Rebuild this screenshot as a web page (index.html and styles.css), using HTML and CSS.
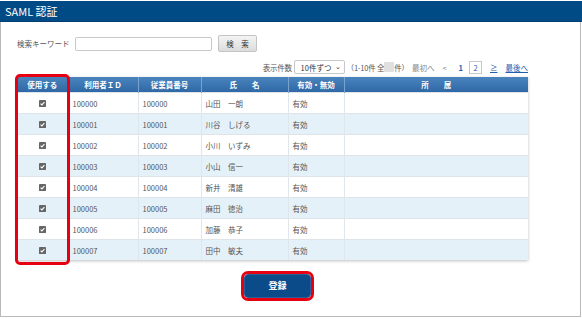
FILE: index.html
```html
<!DOCTYPE html>
<html lang="ja">
<head>
    <meta charset="UTF-8">
    <meta name="viewport" content="width=device-width, initial-scale=1.0">
    <title>SAML 認証</title>
    <link rel="stylesheet" href="styles.css">
</head>
<body>
    <div class="window">
        <header class="titlebar">SAML 認証</header>

        <div class="panel">
            <!-- 検索 -->
            <div class="search-row">
                <label for="keyword">検索キーワード</label>
                <input type="text" id="keyword">
                <button class="btn-search">検　索</button>
            </div>

            <!-- ページ送り -->
            <div class="pager">
                <span class="pager-label">表示件数</span>
                <span class="select">10件ずつ <span class="caret">&#8964;</span></span>
                <span class="count">（1-10件 全<span class="mask"></span>件）</span>
                <span class="muted">最初へ</span>
                <span class="muted lt">&lt;</span>
                <span class="page current">1</span>
                <span class="page boxed">2</span>
                <a class="link">&ge;</a>
                <a class="link">最後へ</a>
            </div>

            <!-- 一覧 -->
            <div class="table-wrap">
                <table class="users">
                    <colgroup>
                        <col style="width: 51px">
                        <col style="width: 70px">
                        <col style="width: 63px">
                        <col style="width: 87px">
                        <col style="width: 56px">
                        <col>
                    </colgroup>
                    <thead>
                        <tr>
                            <th>使用する</th>
                            <th>利用者ＩＤ</th>
                            <th>従業員番号</th>
                            <th>氏　　名</th>
                            <th>有効・無効</th>
                            <th>所　　属</th>
                        </tr>
                    </thead>
                    <tbody id="rows"></tbody>
                </table>
                <div class="mark-column"></div>
            </div>

            <div class="actions">
                <button class="btn-save">登録</button>
            </div>
        </div>
    </div>

    <script>
        const users = [
            ["100000", "山田　一朗"],
            ["100001", "川谷　しげる"],
            ["100002", "小川　いずみ"],
            ["100003", "小山　信一"],
            ["100004", "新井　清雄"],
            ["100005", "麻田　徳治"],
            ["100006", "加藤　恭子"],
            ["100007", "田中　敏夫"]
        ];

        const check = '<svg class="chk" width="7" height="7" viewBox="0 0 8 8"><rect width="8" height="8" rx="1" fill="#666"/><path d="M1.8 4.2 L3.3 5.6 L6.2 2.4" fill="none" stroke="#fff" stroke-width="1.2"/></svg>';

        let html = "";
        users.forEach(([id, name]) => {
            html += `<tr>
                <td class="c">${check}</td>
                <td>${id}</td>
                <td>${id}</td>
                <td>${name}</td>
                <td>有効</td>
                <td></td>
            </tr>`;
        });
        document.getElementById("rows").innerHTML = html;
    </script>
</body>
</html>
```

FILE: styles.css
```css
body {
    margin: 0;
    font-family: "Noto Sans CJK JP", "Noto Sans", sans-serif;
    color: #444;
    background: #fff;
}
.window {
    width: 582px;
    height: 318px;
    padding-top: 1px;
    box-sizing: border-box;
    background: #fff;
}
.titlebar {
    height: 20px;
    line-height: 20px;
    background-color: #004a86;
    border-bottom: 1px solid #003d70;
    color: #fff;
    font-size: 11px;
    padding-left: 5px;
}
.panel {
    height: 295px;
    box-sizing: border-box;
    border-left: 1px solid #b9b9b9;
    border-right: 1px solid #b9b9b9;
    border-bottom: 1px solid #b9b9b9;
    width: 581px;
    padding: 13px 0 0 16px;
}
.search-row {
    display: flex;
    align-items: center;
    height: 17px;
    font-size: 7.5px;
}
.search-row label {
    color: #555;
    width: 58px;
}
.search-row input {
    width: 137px;
    height: 14px;
    box-sizing: border-box;
    border: 1px solid #c8c8c8;
    border-radius: 2px;
    margin: 0;
    padding: 0 3px;
}
.btn-search {
    margin-left: 6px;
    width: 39px;
    height: 17px;
    border: 1px solid #c4c4c4;
    border-radius: 2px;
    background: linear-gradient(#f4f4f4, #dcdcdc);
    font-family: inherit;
    font-size: 7.5px;
    color: #333;
    padding: 0;
}
.pager {
    display: flex;
    align-items: center;
    justify-content: flex-end;
    width: 511px;
    height: 14px;
    margin-top: 8px;
    font-size: 7.5px;
    color: #555;
}
.pager-label {
    letter-spacing: -0.3px;
}
.select {
    margin-left: 2px;
    width: 51px;
    height: 14px;
    box-sizing: border-box;
    border: 1px solid #c8c8c8;
    border-radius: 2px;
    display: flex;
    align-items: center;
    justify-content: space-between;
    padding: 0 3px 0 6px;
    color: #333;
}
.caret {
    font-size: 7px;
    line-height: 6px;
    margin-top: -3px;
}
.count {
    margin-left: 2px;
    display: flex;
    align-items: center;
    letter-spacing: -0.2px;
}
.mask {
    display: inline-block;
    width: 10px;
    height: 10px;
    background: #e0e0e0;
}
.muted {
    margin-left: 3px;
    color: #888;
}
.lt {
    margin-left: 8px;
}
.page {
    margin-left: 12px;
    color: #1f5fb0;
}
.current {
    font-weight: bold;
}
.boxed {
    margin-left: 6px;
    width: 13px;
    height: 13px;
    box-sizing: border-box;
    border: 1px solid #c8c8c8;
    text-align: center;
    line-height: 11px;
}
.link {
    color: #1f5fb0;
    text-decoration: underline;
    margin-left: 8px;
}
.table-wrap {
    position: relative;
    width: 511px;
    margin-top: 3px;
}
.users {
    width: 511px;
    border-collapse: collapse;
    table-layout: fixed;
    font-size: 7.5px;
    box-shadow: 0 1px 3px rgba(0, 0, 0, 0.25);
}
.users th {
    height: 15px;
    padding: 0;
    background: linear-gradient(#4a84bd, #2f68a6);
    color: #fff;
    font-weight: bold;
    border-left: 1px solid #7aa3cf;
    text-align: center;
}
.users th:first-child {
    border-left: none;
}
.users td {
    height: 20px;
    padding: 0 0 0 4px;
    border-top: 1px solid #dfe4e8;
    border-left: 1px solid #dfe6ec;
    color: #555;
    white-space: pre;
}
.users td:first-child {
    border-left: none;
}
.users tbody tr:nth-child(even) td {
    background-color: #e5f1f8;
}
.users td.c {
    text-align: center;
    padding: 0;
}
.chk {
    display: block;
    margin: 0 auto;
}
.mark-column {
    position: absolute;
    left: -2px;
    top: -3px;
    width: 49px;
    height: 185px;
    border: 3px solid #e60012;
    border-radius: 5px;
}
.actions {
    padding: 10px 0 0 227px;
}
.btn-save {
    width: 67px;
    height: 24px;
    border: 1px solid #2d5f96;
    border-radius: 4px;
    background-color: #0b4b8a;
    color: #fff;
    font-family: inherit;
    font-size: 9px;
    font-weight: bold;
    outline: 3px solid #e60012;
    outline-offset: 0;
    padding: 0;
}
```
